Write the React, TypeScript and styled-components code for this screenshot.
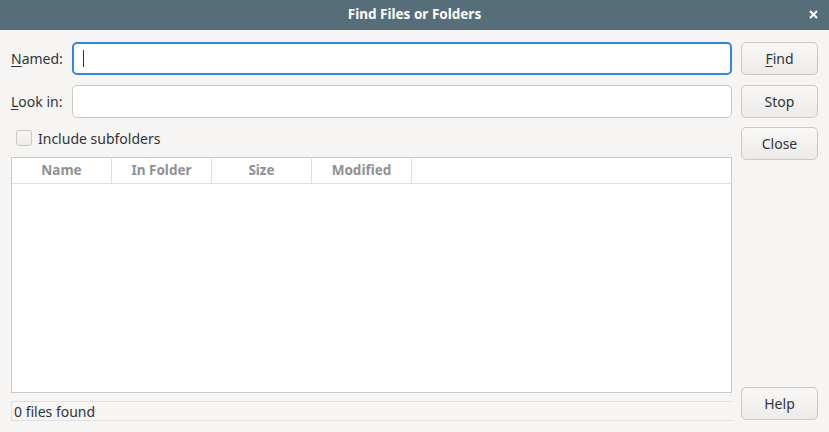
import React from "react";
import styled, { createGlobalStyle } from "styled-components";

const Global = createGlobalStyle`
  html, body { margin: 0; padding: 0; }
  body {
    width: 829px; height: 432px; overflow: hidden;
    background: #f6f5f4;
    font-family: "Noto Sans", "DejaVu Sans", sans-serif;
    color: #2e3436;
  }
`;

const Window = styled.div`
  width: 829px; height: 432px;
  display: flex; flex-direction: column;
  background: #f6f5f4;
`;

const TitleBar = styled.div`
  height: 30px; flex: none;
  box-sizing: border-box;
  padding-bottom: 2px;
  background: #566e79;
  display: flex; align-items: center; justify-content: center;
  position: relative;
  color: #ffffff;
  font-weight: 700; font-size: 13.5px;
`;

const CloseX = styled.div`
  position: absolute; right: 11px; top: 10px;
  width: 9px; height: 9px;
  display: flex;
`;

const Body = styled.div`
  flex: 1;
  display: flex; gap: 9px;
  padding: 12px 11px 11px 11px;
  min-height: 0;
`;

const Main = styled.div`
  flex: 1; display: flex; flex-direction: column; min-width: 0;
`;

const FieldRow = styled.div<{ $mb?: number }>`
  display: flex; align-items: center;
  height: 33px;
  margin-bottom: ${(p) => p.$mb ?? 0}px;
`;

const Label = styled.label`
  width: 61px; flex: none;
  font-size: 14px;
  u { text-decoration: underline; text-underline-offset: 2px; }
`;

const Entry = styled.div<{ $focus?: boolean }>`
  flex: 1; height: 100%;
  box-sizing: border-box;
  background: #ffffff;
  border-radius: 5px;
  border: ${(p) => (p.$focus ? "2px solid #3584e4" : "1px solid #cdc7c2")};
  display: flex; align-items: center;
  padding-left: ${(p) => (p.$focus ? 9 : 10)}px;
`;

const Caret = styled.span`
  width: 1px; height: 17px; background: #2e3436;
`;

const CheckRow = styled.div`
  display: flex; align-items: center; gap: 6px;
  margin: 12px 0 11px 5px;
  height: 16px;
  font-size: 14px;
`;

const CheckBox = styled.span`
  width: 16px; height: 16px; box-sizing: border-box;
  border: 1px solid #cdc7c2; border-radius: 3px;
  background: linear-gradient(#f9f8f7, #edebe9);
`;

const Table = styled.div`
  flex: 1;
  background: #ffffff;
  border: 1px solid #cdc7c2;
  display: flex; flex-direction: column;
  min-height: 0;
`;

const HeaderRow = styled.div`
  height: 25px; display: flex;
  border-bottom: 1px solid #e1dedb;
`;

const HeaderCell = styled.div`
  width: 100px; flex: none;
  box-sizing: border-box;
  border-right: 1px solid #e1dedb;
  display: flex; align-items: center; justify-content: center;
  padding-bottom: 2px;
  font-size: 13.5px; font-weight: 700; color: #8e9191;
`;

const Status = styled.div`
  margin-top: 8px;
  height: 20px; box-sizing: border-box;
  border: 1px solid #e3e0dd;
  border-right: none;
  display: flex; align-items: center;
  padding-left: 2px;
  font-size: 14px;
  margin-right: -1px;
`;

const Side = styled.div`
  width: 77px; flex: none;
  display: flex; flex-direction: column; gap: 9.5px;
  padding-bottom: 1px;
`;

const Button = styled.button<{ $push?: boolean }>`
  height: 33px; width: 77px;
  box-sizing: border-box;
  border: 1px solid #cdc7c2; border-radius: 5px;
  background: linear-gradient(#f9f8f7, #edebe9);
  font-family: "Noto Sans", "DejaVu Sans", sans-serif;
  font-size: 14px; color: #2e3436;
  padding: 0;
  margin-top: ${(p) => (p.$push ? "auto" : "0")};
  u { text-decoration: underline; text-underline-offset: 2px; }
`;

export default function App() {
  return (
    <Window>
      <Global />
      <TitleBar>
        Find Files or Folders
        <CloseX>
          <svg width="9" height="9" viewBox="0 0 9 9">
            <path d="M1 1 L8 8 M8 1 L1 8" stroke="#fff" strokeWidth="2" />
          </svg>
        </CloseX>
      </TitleBar>
      <Body>
        <Main>
          <FieldRow $mb={10}>
            <Label><u>N</u>amed:</Label>
            <Entry $focus><Caret /></Entry>
          </FieldRow>
          <FieldRow>
            <Label><u>L</u>ook in:</Label>
            <Entry />
          </FieldRow>
          <CheckRow>
            <CheckBox />
            Include subfolders
          </CheckRow>
          <Table>
            <HeaderRow>
              <HeaderCell>Name</HeaderCell>
              <HeaderCell>In Folder</HeaderCell>
              <HeaderCell>Size</HeaderCell>
              <HeaderCell>Modified</HeaderCell>
            </HeaderRow>
          </Table>
          <Status>0 files found</Status>
        </Main>
        <Side>
          <Button><u>F</u>ind</Button>
          <Button>Stop</Button>
          <Button>Close</Button>
          <Button $push>Help</Button>
        </Side>
      </Body>
    </Window>
  );
}
